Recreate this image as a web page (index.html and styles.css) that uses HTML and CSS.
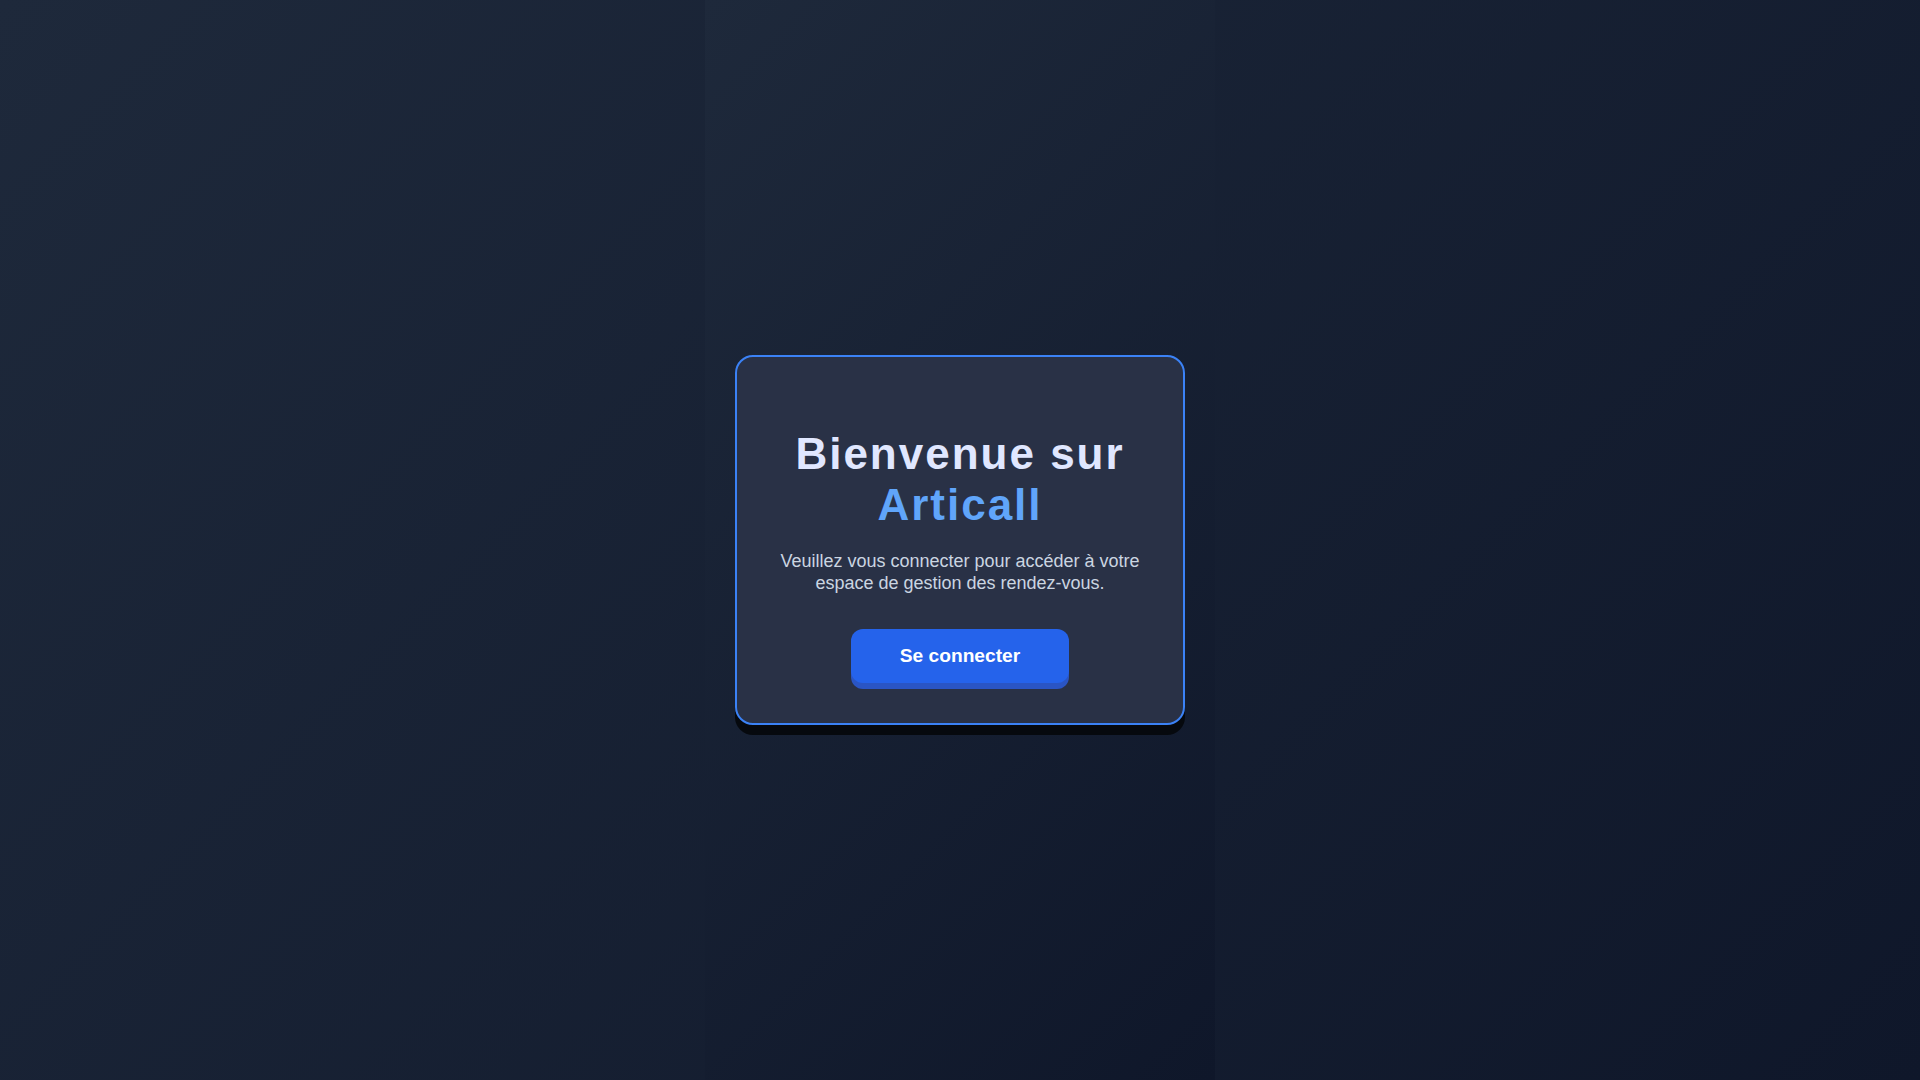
FILE: index.html
```html
<!DOCTYPE html>
<html lang="fr">
<head>
<meta charset="utf-8">
<title>Articall</title>
<link rel="stylesheet" href="styles.css">
</head>
<body>
<div class="page">
  <div class="side"></div>
  <main class="center">
    <section class="card">
      <h1 class="title">Bienvenue sur<br><span class="brand">Articall</span></h1>
      <p class="lead">Veuillez vous connecter pour accéder à votre espace de gestion des rendez-vous.</p>
      <button class="btn" type="button">Se connecter</button>
    </section>
  </main>
  <div class="side"></div>
</div>
</body>
</html>
```
FILE: styles.css
```css
html, body {
  margin: 0;
  padding: 0;
  height: 100%;
}
body {
  font-family: "Liberation Sans", Arial, sans-serif;
  background: #0f172a;
}
.page {
  display: grid;
  grid-template-columns: 1fr 510px 1fr;
  height: 100vh;
  background: linear-gradient(135deg, #1e293b 0%, #0f172a 100%);
}
.center {
  display: flex;
  align-items: center;
  justify-content: center;
  background: linear-gradient(135deg, #1e293b 0%, #0f172a 100%);
}
.card {
  box-sizing: border-box;
  width: 450px;
  padding: 71px 30px 40px;
  background: #293146;
  border: 2px solid #3b82f6;
  border-radius: 18px;
  box-shadow: 0 10px 0 #06090e;
  text-align: center;
}
.title {
  margin: 0;
  font-size: 44px;
  line-height: 51px;
  font-weight: 700;
  letter-spacing: 2px;
  color: #e0e7ff;
}
.brand {
  color: #60a5fa;
}
.lead {
  margin: 20px 0 35px;
  font-size: 18px;
  line-height: 22px;
  color: #cbd5e1;
}
.btn {
  font-family: "Liberation Sans", Arial, sans-serif;
  font-size: 19.2px;
  font-weight: 700;
  line-height: 22px;
  color: #ffffff;
  background: #2563eb;
  border: none;
  border-radius: 12px;
  padding: 16px 49px;
  box-shadow: 0 6px 0 #2a55c4;
  cursor: pointer;
}
```
